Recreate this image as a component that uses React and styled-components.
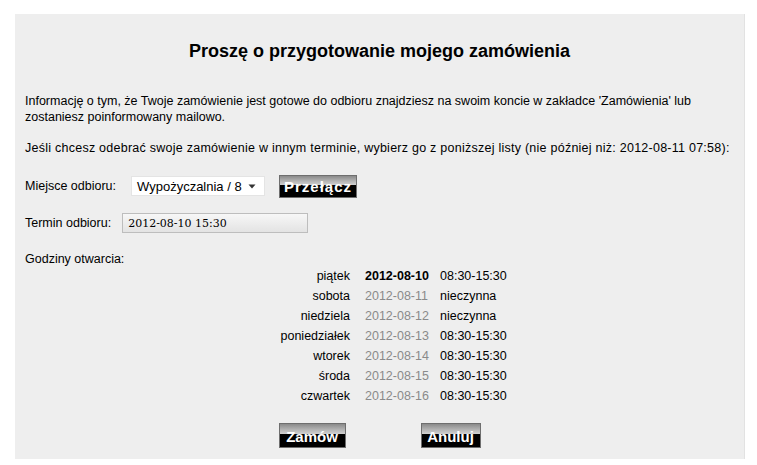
import { Fragment } from 'react'
import styled, { createGlobalStyle } from 'styled-components'

const GlobalStyle = createGlobalStyle`
  body {
    margin: 0;
    background: #fff;
    font-family: Arial, "Liberation Sans", sans-serif;
    font-size: 12.5px;
    color: #000;
  }
`

const Panel = styled.div`
  margin: 14px 0 0 15px;
  width: 730px;
  height: 445px;
  box-sizing: border-box;
  padding: 27px 10px 0;
  background: #eeeeee;
  border-right: 1px solid #e2e2e2;
`

const Title = styled.h1`
  margin: 0 0 32px;
  font-size: 18px;
  line-height: 20px;
  font-weight: bold;
  text-align: center;
`

const Para = styled.p`
  margin: 0 0 15px;
  line-height: 16px;
  letter-spacing: ${({ ls }) => ls || 0}px;
`

const Row = styled.div`
  display: flex;
  align-items: center;
  height: ${({ h }) => h || 20}px;
  margin-top: ${({ mt }) => mt || 0}px;
`

const Label = styled.span`
  margin-right: ${({ mr }) => mr}px;
  white-space: nowrap;
`

const Select = styled.div`
  width: 134px;
  height: 20px;
  box-sizing: border-box;
  display: flex;
  align-items: center;
  justify-content: space-between;
  padding: 0 8px 0 5px;
  margin-right: 14px;
  background: #fff;
  border: 1px solid #e4e4e4;
  font-size: 13px;
`

const Field = styled.div`
  width: 186px;
  height: 20px;
  box-sizing: border-box;
  display: flex;
  align-items: center;
  padding-left: 5px;
  border: 1px solid #bdbdbd;
  background: linear-gradient(#f7f7f7, #e3e3e3);
  font-family: "DejaVu Serif", Georgia, serif;
  font-size: 11px;
`

const Button = styled.button`
  width: ${({ w }) => w}px;
  height: ${({ h }) => h || 25}px;
  padding: 2px 0 0;
  border: 1px solid #6e6e6e;
  background: linear-gradient(#8a8a8a 0%, #b4b4b4 25%, #d2d2d2 44%, #000 45%, #000 100%);
  color: #fff;
  font-family: Arial, "Liberation Sans", sans-serif;
  font-weight: bold;
  font-size: 15px;
  line-height: 16px;
  letter-spacing: ${({ ls }) => ls || 0}px;
  white-space: nowrap;
  cursor: pointer;
`

const Hours = styled.div`
  display: grid;
  grid-template-columns: 325px 60px auto;
  column-gap: 15px;
`

const Cell = styled.div`
  height: 20px;
  line-height: 20px;
  white-space: nowrap;
  text-align: ${({ right }) => (right ? 'right' : 'left')};
  color: ${({ muted }) => (muted ? '#8a8a8a' : '#000')};
  font-weight: ${({ bold }) => (bold ? 'bold' : 'normal')};
`

const Actions = styled.div`
  display: flex;
  justify-content: center;
  gap: 75px;
  margin-top: 17px;
`

const days = [
  ['piątek', '2012-08-10', '08:30-15:30', true],
  ['sobota', '2012-08-11', 'nieczynna'],
  ['niedziela', '2012-08-12', 'nieczynna'],
  ['poniedziałek', '2012-08-13', '08:30-15:30'],
  ['wtorek', '2012-08-14', '08:30-15:30'],
  ['środa', '2012-08-15', '08:30-15:30'],
  ['czwartek', '2012-08-16', '08:30-15:30'],
]

function Arrow() {
  return (
    <svg width="8" height="5" viewBox="0 0 8 5">
      <path d="M0.5 0.5 L7.5 0.5 L4 4.5 Z" fill="#333" />
    </svg>
  )
}

export default function App() {
  return (
    <>
      <GlobalStyle />
      <Panel>
        <Title>Proszę o przygotowanie mojego zamówienia</Title>
        <Para>
          Informację o tym, że Twoje zamówienie jest gotowe do odbioru znajdziesz na swoim koncie w zakładce 'Zamówienia' lub zostaniesz poinformowany mailowo.
        </Para>
        <Para ls={0.25}>
          Jeśli chcesz odebrać swoje zamówienie w innym terminie, wybierz go z poniższej listy (nie później niż: 2012-08-11 07:58):
        </Para>

        <Row h={24} mt={18}>
          <Label mr={15}>Miejsce odbioru:</Label>
          <Select>
            <span>Wypożyczalnia / 8</span>
            <Arrow />
          </Select>
          <Button w={78} h={23} ls={1}>Przełącz</Button>
        </Row>

        <Row mt={15}>
          <Label mr={11}>Termin odbioru:</Label>
          <Field>2012-08-10 15:30</Field>
        </Row>

        <Row h={15} mt={18}>Godziny otwarcia:</Row>

        <Hours>
          {days.map(([day, date, hours, today]) => (
            <Fragment key={day}>
              <Cell right>{day}</Cell>
              <Cell muted={!today} bold={today}>{date}</Cell>
              <Cell>{hours}</Cell>
            </Fragment>
          ))}
        </Hours>

        <Actions>
          <Button w={67}>Zamów</Button>
          <Button w={60}>Anuluj</Button>
        </Actions>
      </Panel>
    </>
  )
}
